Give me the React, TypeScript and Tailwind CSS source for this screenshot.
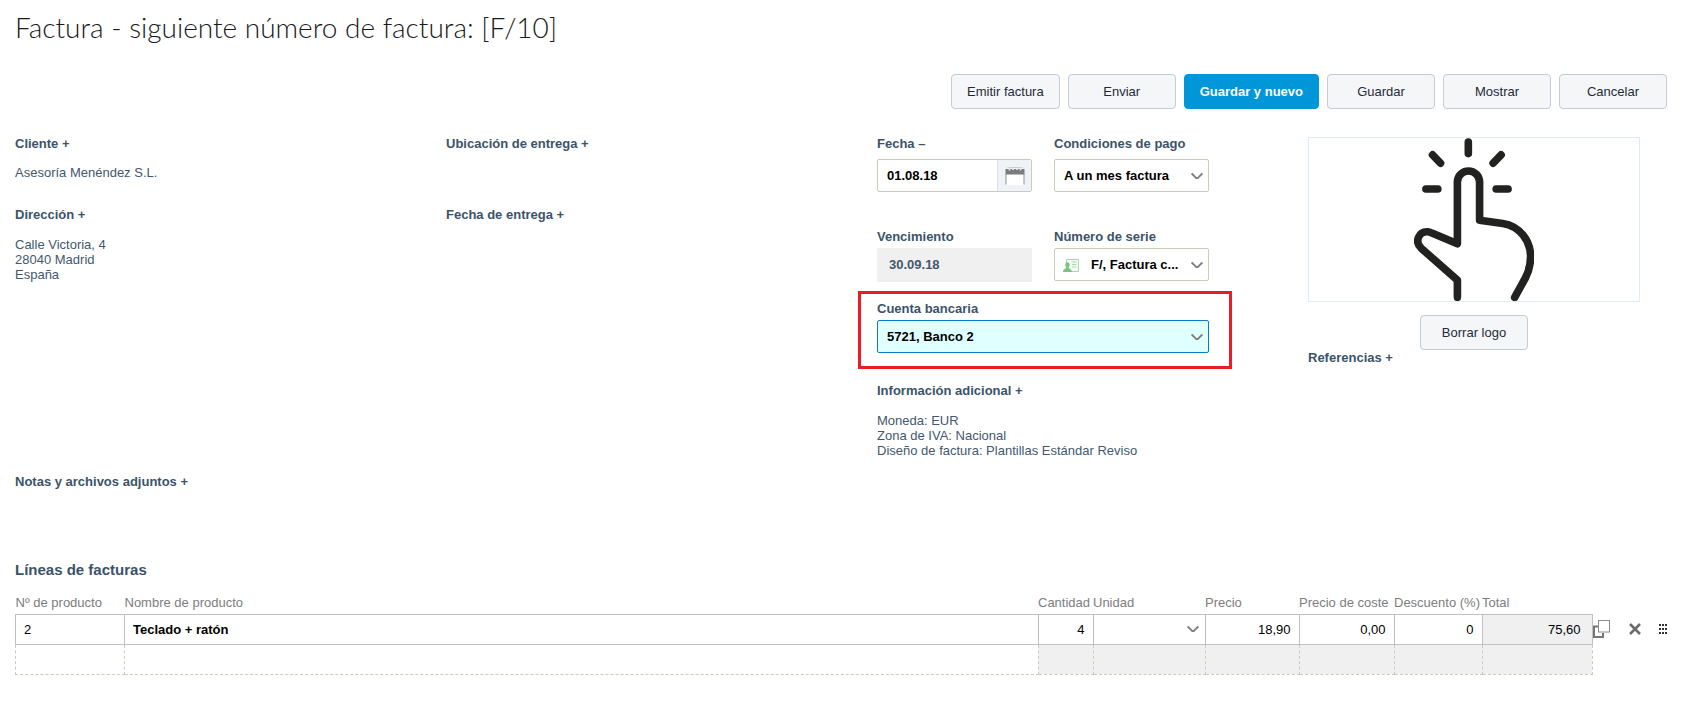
import { useState } from 'react';
import type { ReactNode } from 'react';

interface InvoiceLine {
  id: number;
  product: string;
  name: string;
  quantity: string;
  unit: string;
  price: string;
  cost: string;
  discount: string;
  total: string;
}

const initialLines: InvoiceLine[] = [
  {
    id: 1,
    product: '2',
    name: 'Teclado + ratón',
    quantity: '4',
    unit: '',
    price: '18,90',
    cost: '0,00',
    discount: '0',
    total: '75,60',
  },
];

const actions = [
  { label: 'Emitir factura' },
  { label: 'Enviar' },
  { label: 'Guardar y nuevo', primary: true },
  { label: 'Guardar' },
  { label: 'Mostrar' },
  { label: 'Cancelar' },
];

function Chevron() {
  return (
    <svg
      className="pointer-events-none absolute right-[6px] top-1/2 h-3 w-3 -translate-y-1/2"
      viewBox="0 0 12 12"
      fill="none"
      stroke="#808080"
      strokeWidth="2"
    >
      <path d="M0.6 3.4 L4.6 7.4 Q6 8.7 7.4 7.4 L11.4 3.4" />
    </svg>
  );
}

function CalendarIcon() {
  return (
    <svg width="20" height="18" viewBox="0 0 20 18">
      <path d="M1 7h18v11H1z" fill="#fff" />
      <path d="M0.5 2h19v5.500h-19z" fill="#7b7b7b" />
      <path d="M1 7v10.500M19 7v10.500" stroke="#909090" />
      <path d="M2.500 0.500h15" stroke="#c9cdd0" />
      <path d="M4.500 0.500v3M15.500 0.500v3M8 1.500v1.500M12 1.500v1.500" stroke="#e2e6e9" strokeWidth="1.8" />
    </svg>
  );
}

function SeriesIcon() {
  return (
    <svg
      className="pointer-events-none absolute left-[9px] top-1/2 h-4 w-4 -translate-y-1/2"
      viewBox="0 0 16 16"
    >
      <path d="M3.500 2.500h12v12h-12z" fill="#f6fbf7" stroke="#a5d9a9" />
      <path d="M8.500 5h5M9 7.500h4.500M9 10h4.500" stroke="#a5d9a9" />
      <path d="M4.500 5.200c1.500 0 2.200 1.100 2.200 2.500S5.900 10.300 5.600 10.700c0 .8 3.200.9 3.400 4.300H0c.2-3.400 3.400-3.500 3.400-4.300C3.100 10.300 2.300 9.100 2.300 7.700S3 5.200 4.500 5.200z" fill="#78c57d" />
    </svg>
  );
}

function TouchLogo() {
  return (
    <svg
      className="h-full"
      viewBox="370 24 364 492"
      fill="none"
      stroke="#222220"
      strokeWidth="23"
      strokeLinecap="round"
      strokeLinejoin="round"
    >
      <path d="M501 505V453L392 357C370 336 385 305 412 307Q418 308 424 311L501 343V157a33.500 33.500 0 0 1 67 0V272L638 282C690 290 722 335 722 382C722 408 715 430 706 447L674 505" />
      <path d="M534 36V71M426 75L450 100M633 75L609 100M406 178H442M618 178H654" />
    </svg>
  );
}

function CopyIcon() {
  return (
    <svg width="18" height="18" viewBox="0 0 18 18" fill="none">
      <path d="M5 6.500H1V17H10V13" stroke="#757575" strokeWidth="2" />
      <rect x="5.500" y="0.500" width="11" height="11.500" fill="#fff" stroke="#8c8c8c" />
    </svg>
  );
}

function CloseIcon() {
  return (
    <svg width="12" height="12" viewBox="0 0 12 12" stroke="#6b6b6b" strokeWidth="2.500">
      <path d="M1 1L11 11M11 1L1 11" />
    </svg>
  );
}

function GripIcon() {
  return (
    <svg width="8" height="12" viewBox="0 0 8 12" fill="#333">
      <path d="M0 1h2v2H0zM3 1h2v2H3zM6 1h2v2H6zM0 5h2v2H0zM3 5h2v2H3zM6 5h2v2H6zM0 9h2v2H0zM3 9h2v2H3zM6 9h2v2H6z" />
    </svg>
  );
}

function Button({ primary, children }: { primary?: boolean; children: ReactNode }) {
  return (
    <button
      type="button"
      className={`h-[35px] min-w-[108px] rounded border px-[15px] pb-px ${
        primary
          ? 'border-[#0096d8] bg-[#0096d8] font-bold text-white'
          : 'border-[#c3cbd6] bg-[#f4f6f8] text-[#1e2b37] hover:bg-[#eaeef2]'
      }`}
    >
      {children}
    </button>
  );
}

function Heading({ children }: { children: ReactNode }) {
  return (
    <button type="button" className="block text-left font-bold text-[#3b5369]">
      {children}
    </button>
  );
}

export default function App() {
  const [date, setDate] = useState('01.08.18');
  const [lines, setLines] = useState<InvoiceLine[]>(initialLines);

  const updateLine = (id: number, field: keyof InvoiceLine, value: string) => {
    setLines(prev => prev.map(l => (l.id === id ? { ...l, [field]: value } : l)));
  };

  const removeLine = (id: number) => {
    setLines(prev => prev.filter(l => l.id !== id));
  };

  const labelClass = 'block font-bold text-[#3b5369]';
  const selectClass =
    'h-[33px] w-full appearance-none rounded-xs border border-[#c9ccb8] bg-white pb-px pl-[9px] pr-6 font-bold text-black';
  const numberClass = 'h-[29px] w-full bg-transparent pr-2 text-right text-black';
  const cellClass = 'border border-[#c0c0c0] p-0';
  const emptyClass = 'h-[30px] border border-dashed border-[#c9ccb8]';
  const headClass = 'whitespace-nowrap px-0 pb-[2px] pt-0 text-left font-normal';

  return (
    <div className="bg-white pb-6 font-['Liberation_Sans',Arial,sans-serif] text-[13px] leading-[15px] text-[#43586c]">
      <h1 className="px-[15px] pt-[7px] font-['Lato',sans-serif] text-[28px] font-light leading-[40px] text-[#1a1a1a]">
        Factura - siguiente número de factura: [F/10]
      </h1>

      {/* Actions */}
      <div className="mt-[27px] flex flex-wrap justify-end gap-2 px-[15px]">
        {actions.map(a => (
          <Button key={a.label} primary={a.primary}>
            {a.label}
          </Button>
        ))}
      </div>

      {/* Invoice details */}
      <div className="mt-[27px] grid grid-cols-4 gap-x-[99px] pl-[15px] pr-[42px]">
        <section>
          <Heading>Cliente +</Heading>
          <p className="mt-[14px]">Asesoría Menéndez S.L.</p>
          <div className="mt-[27px]">
            <Heading>Dirección +</Heading>
          </div>
          <address className="mt-[15px] not-italic">
            Calle Victoria, 4
            <br />
            28040 Madrid
            <br />
            España
          </address>
        </section>

        <section>
          <Heading>Ubicación de entrega +</Heading>
          <div className="mt-14">
            <Heading>Fecha de entrega +</Heading>
          </div>
        </section>

        <section>
          <div className="grid grid-cols-2 gap-x-[22px]">
            <div>
              <label htmlFor="date" className={labelClass}>
                Fecha –
              </label>
              <div className="mt-2 flex h-[33px] overflow-hidden rounded-xs border border-[#c9ccb8]">
                <input
                  id="date"
                  value={date}
                  onChange={e => setDate(e.target.value)}
                  className="min-w-0 flex-1 pb-px pl-[9px] font-bold text-black"
                />
                <button
                  type="button"
                  aria-label="Calendario"
                  className="flex w-[34px] items-center justify-center border-l border-[#dde1dc] bg-[#eef3f7]"
                >
                  <CalendarIcon />
                </button>
              </div>
            </div>
            <div>
              <label htmlFor="terms" className={labelClass}>
                Condiciones de pago
              </label>
              <div className="relative mt-2">
                <select id="terms" className={selectClass}>
                  <option>A un mes factura</option>
                </select>
                <Chevron />
              </div>
            </div>
            <div className="mt-[37px]">
              <label htmlFor="due" className={labelClass}>
                Vencimiento
              </label>
              <input
                id="due"
                readOnly
                value="30.09.18"
                className="mt-1 block h-[34px] w-full bg-[#f0f0f0] pb-px pl-3 font-bold text-[#43586c]"
              />
            </div>
            <div className="mt-[37px]">
              <label htmlFor="series" className={labelClass}>
                Número de serie
              </label>
              <div className="relative mt-1">
                <select
                  id="series"
                  className="h-[33px] w-full appearance-none rounded-xs border border-[#c9ccb8] bg-white pb-px pl-9 pr-5 font-bold text-black"
                >
                  <option>F/, Factura c...</option>
                </select>
                <SeriesIcon />
                <Chevron />
              </div>
            </div>
          </div>

          {/* Bank account */}
          <div className="-ml-[19px] -mr-[23px] mt-[9px] border-3 border-[#ed1c24] pb-[13px] pl-4 pr-5 pt-[7px]">
            <label htmlFor="bank" className={labelClass}>
              Cuenta bancaria
            </label>
            <div className="relative mt-1">
              <select
                id="bank"
                className="block h-[33px] w-full appearance-none rounded-xs border border-[#0a7cc4] bg-[#e0ffff] pb-px pl-[9px] pr-6 font-bold text-black"
              >
                <option>5721, Banco 2</option>
              </select>
              <Chevron />
            </div>
          </div>

          <div className="mt-[14px]">
            <Heading>Información adicional +</Heading>
          </div>
          <p className="mt-[15px] whitespace-nowrap">
            Moneda: EUR
            <br />
            Zona de IVA: Nacional
            <br />
            Diseño de factura: Plantillas Estándar Reviso
          </p>
        </section>

        <section className="pt-px">
          <div className="flex h-[165px] justify-center border border-[#dcebf5]">
            <TouchLogo />
          </div>
          <div className="mt-[13px] flex justify-center">
            <Button>Borrar logo</Button>
          </div>
          <Heading>Referencias +</Heading>
        </section>
      </div>

      <div className="mt-4 px-[15px]">
        <Heading>Notas y archivos adjuntos +</Heading>
      </div>

      {/* Invoice lines */}
      <div className="mt-[71px] px-[15px]">
        <h2 className="text-[15px] font-bold leading-5 text-[#3b5369]">Líneas de facturas</h2>
        <table className="mt-[14px] w-full table-fixed border-collapse">
          <colgroup>
            <col className="w-[109px]" />
            <col />
            <col className="w-[55px]" />
            <col className="w-[112px]" />
            <col className="w-[94px]" />
            <col className="w-[95px]" />
            <col className="w-[88px]" />
            <col className="w-[110px]" />
            <col className="w-[75px]" />
          </colgroup>
          <thead>
            <tr className="h-5 text-[#7d7d7d]">
              <th className={headClass}>Nº de producto</th>
              <th className={headClass}>Nombre de producto</th>
              <th className={headClass}>Cantidad</th>
              <th className={headClass}>Unidad</th>
              <th className={headClass}>Precio</th>
              <th className={headClass}>Precio de coste</th>
              <th className={headClass}>Descuento (%)</th>
              <th className={headClass}>Total</th>
              <td />
            </tr>
          </thead>
          <tbody>
            {lines.map(line => (
              <tr key={line.id}>
                <td className={cellClass}>
                  <input
                    aria-label="Nº de producto"
                    value={line.product}
                    onChange={e => updateLine(line.id, 'product', e.target.value)}
                    className="h-[29px] w-full pl-2 text-black"
                  />
                </td>
                <td className={cellClass}>
                  <input
                    aria-label="Nombre de producto"
                    value={line.name}
                    onChange={e => updateLine(line.id, 'name', e.target.value)}
                    className="h-[29px] w-full pl-2 font-bold text-black"
                  />
                </td>
                <td className={cellClass}>
                  <input
                    aria-label="Cantidad"
                    value={line.quantity}
                    onChange={e => updateLine(line.id, 'quantity', e.target.value)}
                    className={numberClass}
                  />
                </td>
                <td className={cellClass}>
                  <div className="relative">
                    <select
                      aria-label="Unidad"
                      value={line.unit}
                      onChange={e => updateLine(line.id, 'unit', e.target.value)}
                      className="block h-[29px] w-full appearance-none pl-2"
                    >
                      <option value="" />
                    </select>
                    <Chevron />
                  </div>
                </td>
                <td className={cellClass}>
                  <input
                    aria-label="Precio"
                    value={line.price}
                    onChange={e => updateLine(line.id, 'price', e.target.value)}
                    className={numberClass}
                  />
                </td>
                <td className={cellClass}>
                  <input
                    aria-label="Precio de coste"
                    value={line.cost}
                    onChange={e => updateLine(line.id, 'cost', e.target.value)}
                    className={numberClass}
                  />
                </td>
                <td className={cellClass}>
                  <input
                    aria-label="Descuento (%)"
                    value={line.discount}
                    onChange={e => updateLine(line.id, 'discount', e.target.value)}
                    className={numberClass}
                  />
                </td>
                <td className="border border-[#c0c0c0] bg-[#f0f0f0] py-0 pl-0 pr-[11px] text-right text-black">
                  {line.total}
                </td>
                <td className="p-0">
                  <div className="flex items-center justify-between">
                    <button type="button" aria-label="Duplicar">
                      <CopyIcon />
                    </button>
                    <div className="flex items-center gap-[18px]">
                      <button type="button" aria-label="Eliminar" onClick={() => removeLine(line.id)}>
                        <CloseIcon />
                      </button>
                      <button type="button" aria-label="Mover">
                        <GripIcon />
                      </button>
                    </div>
                  </div>
                </td>
              </tr>
            ))}
            <tr>
              <td className={emptyClass} />
              <td className={emptyClass} />
              <td className={`${emptyClass} bg-[#f0f0f0]`} />
              <td className={`${emptyClass} bg-[#f0f0f0]`} />
              <td className={`${emptyClass} bg-[#f0f0f0]`} />
              <td className={`${emptyClass} bg-[#f0f0f0]`} />
              <td className={`${emptyClass} bg-[#f0f0f0]`} />
              <td className={`${emptyClass} bg-[#f0f0f0]`} />
              <td />
            </tr>
          </tbody>
        </table>
      </div>
    </div>
  );
}
